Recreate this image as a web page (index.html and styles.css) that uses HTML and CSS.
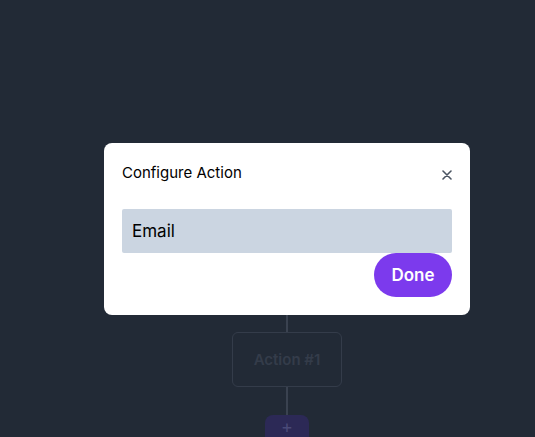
FILE: index.html
```html
<!DOCTYPE html>
<html>
<head>
<meta charset="utf-8">
<link rel="stylesheet" href="styles.css">
</head>
<body>
<div class="canvas">
  <div class="flow">
    <div class="line line-top"></div>
    <div class="node">Action #1</div>
    <div class="line line-mid"></div>
    <div class="add">+</div>
  </div>
</div>
<div class="modal">
  <div class="modal-head">
    <span class="title">Configure Action</span>
    <span class="close">
      <svg width="10" height="10" viewBox="0 0 10 10"><path d="M1 1L9 9M9 1L1 9" stroke="#4b5563" stroke-width="1.6" stroke-linecap="round"/></svg>
    </span>
  </div>
  <div class="field">Email</div>
  <div class="actions"><button class="done">Done</button></div>
</div>
</body>
</html>
```
FILE: styles.css
```css
html, body {
  margin: 0;
  padding: 0;
  width: 535px;
  height: 437px;
  overflow: hidden;
  background: #222a36;
  font-family: Inter, "Noto Sans", sans-serif;
}
.canvas {
  padding-top: 300px;
  padding-left: 232px;
}
.flow {
  width: 110px;
  display: flex;
  flex-direction: column;
  align-items: center;
}
.line {
  width: 2px;
  background: #3a4250;
}
.line-top { height: 32px; }
.line-mid { height: 28px; }
.node {
  box-sizing: border-box;
  width: 110px;
  height: 55px;
  border: 1px solid #343c4a;
  border-radius: 6px;
  display: flex;
  align-items: center;
  justify-content: center;
  color: #343c4a;
  font-size: 15px;
  font-weight: 600;
}
.add {
  width: 44px;
  height: 30px;
  border-radius: 8px;
  background: #2c2956;
  color: #4a4a78;
  display: flex;
  justify-content: center;
  font-size: 18px;
  line-height: 24px;
}
.modal {
  position: absolute;
  left: 104px;
  top: 143px;
  width: 366px;
  height: 172px;
  box-sizing: border-box;
  background: #fff;
  border-radius: 8px;
  padding: 18px 18px 0 18px;
}
.modal-head {
  display: flex;
  justify-content: space-between;
  align-items: center;
  height: 22px;
}
.title {
  font-size: 15px;
  color: #000;
}
.close {
  display: flex;
  margin-top: 6px;
}
.field {
  margin-top: 26px;
  height: 44px;
  background: #cbd5e1;
  border-radius: 2px;
  display: flex;
  align-items: center;
  padding-left: 10px;
  font-size: 17px;
  color: #000;
}
.actions {
  display: flex;
  justify-content: flex-end;
}
.done {
  width: 78px;
  height: 44px;
  border: none;
  border-radius: 22px;
  background: #7c3aed;
  color: #fff;
  font-family: Inter, "Noto Sans", sans-serif;
  font-size: 17px;
  font-weight: 600;
  padding: 0;
}
```
